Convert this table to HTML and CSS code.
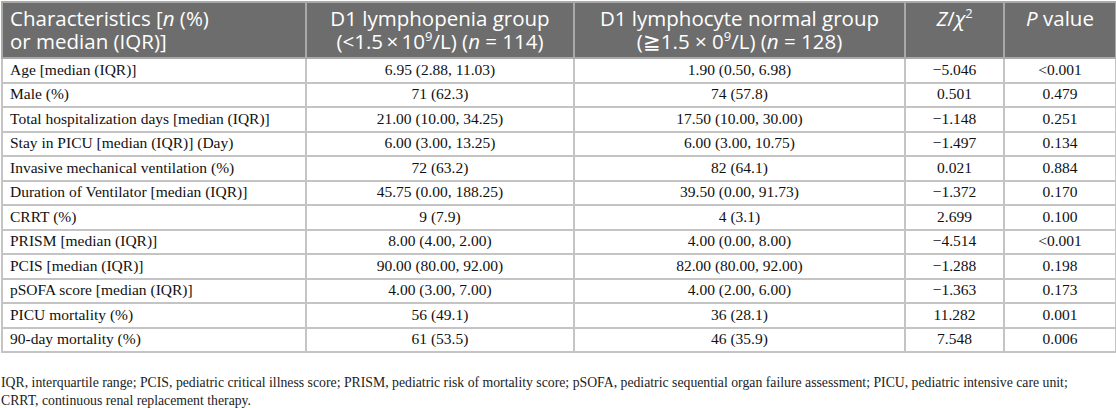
FILE: index.html
```html
<!DOCTYPE html>
<html>
<head>
<meta charset="utf-8">
<link rel="stylesheet" href="styles.css">
</head>
<body>
<table class="tbl">
  <colgroup>
    <col class="c1"><col class="c2"><col class="c3"><col class="c4"><col class="c5">
  </colgroup>
  <thead>
    <tr>
      <th class="left">Characteristics [<i>n</i> (%)<br>or median (IQR)]</th>
      <th>D1 lymphopenia group<br>(&lt;1.5&#8201;×&#8201;10<sup>9</sup>/L) (<i>n</i> = 114)</th>
      <th>D1 lymphocyte normal group<br>(<span class="geq">≧</span>1.5 × 0<sup>9</sup>/L) (<i>n</i> = 128)</th>
      <th class="top"><i>Z</i>/<i>χ</i><sup>2</sup></th>
      <th class="top"><i>P</i> value</th>
    </tr>
  </thead>
  <tbody>
    <tr><td>Age [median (IQR)]</td><td>6.95 (2.88, 11.03)</td><td>1.90 (0.50, 6.98)</td><td>−5.046</td><td>&lt;0.001</td></tr>
    <tr><td>Male (%)</td><td>71 (62.3)</td><td>74 (57.8)</td><td>0.501</td><td>0.479</td></tr>
    <tr><td>Total hospitalization days [median (IQR)]</td><td>21.00 (10.00, 34.25)</td><td>17.50 (10.00, 30.00)</td><td>−1.148</td><td>0.251</td></tr>
    <tr><td>Stay in PICU [median (IQR)] (Day)</td><td>6.00 (3.00, 13.25)</td><td>6.00 (3.00, 10.75)</td><td>−1.497</td><td>0.134</td></tr>
    <tr><td>Invasive mechanical ventilation (%)</td><td>72 (63.2)</td><td>82 (64.1)</td><td>0.021</td><td>0.884</td></tr>
    <tr><td>Duration of Ventilator [median (IQR)]</td><td>45.75 (0.00, 188.25)</td><td>39.50 (0.00, 91.73)</td><td>−1.372</td><td>0.170</td></tr>
    <tr><td>CRRT (%)</td><td>9 (7.9)</td><td>4 (3.1)</td><td>2.699</td><td>0.100</td></tr>
    <tr><td>PRISM [median (IQR)]</td><td>8.00 (4.00, 2.00)</td><td>4.00 (0.00, 8.00)</td><td>−4.514</td><td>&lt;0.001</td></tr>
    <tr><td>PCIS [median (IQR)]</td><td>90.00 (80.00, 92.00)</td><td>82.00 (80.00, 92.00)</td><td>−1.288</td><td>0.198</td></tr>
    <tr><td>pSOFA score [median (IQR)]</td><td>4.00 (3.00, 7.00)</td><td>4.00 (2.00, 6.00)</td><td>−1.363</td><td>0.173</td></tr>
    <tr><td>PICU mortality (%)</td><td>56 (49.1)</td><td>36 (28.1)</td><td>11.282</td><td>0.001</td></tr>
    <tr><td>90-day mortality (%)</td><td>61 (53.5)</td><td>46 (35.9)</td><td>7.548</td><td>0.006</td></tr>
  </tbody>
</table>
<p class="note">IQR, interquartile range; PCIS, pediatric critical illness score; PRISM, pediatric risk of mortality score; pSOFA, pediatric sequential organ failure assessment; PICU, pediatric intensive care unit;<br>CRRT, continuous renal replacement therapy.</p>
</body>
</html>
```
FILE: styles.css
```css
html, body {
  margin: 0;
  padding: 0;
  background: #ffffff;
}
body {
  padding: 1px 0 0 1px;
}
.tbl {
  border-collapse: collapse;
  width: 1114px;
  table-layout: fixed;
}
.c1 { width: 304px; }
.c2 { width: 268px; }
.c3 { width: 331px; }
.c4 { width: 99px; }
.c5 { width: 112px; }
.tbl th {
  background: #6d6d6d;
  color: #ffffff;
  font-family: "Open Sans", "Noto Sans", sans-serif;
  font-weight: 400;
  font-size: 20.5px;
  line-height: 23px;
  text-align: center;
  vertical-align: top;
  padding: 4px 5px 4px 5px;
  border: 2px solid #a9a9a9;
}
.tbl th.left { text-align: left; padding-left: 7px; }
.tbl th sup { font-size: 13px; line-height: 0; vertical-align: 8px; }
.tbl td {
  font-family: "Liberation Serif", "Times New Roman", serif;
  font-size: 15.5px;
  color: #111;
  line-height: 17.5px;
  height: 17.5px;
  padding: 1.5px 6px 3.5px 6px;
  border: 2px solid #c4c4c4;
  text-align: center;
  white-space: nowrap;
}
.tbl td:first-child { text-align: left; padding-left: 7px; }
.note {
  margin: 21px 0 0 0;
  font-family: "Liberation Serif", "Times New Roman", serif;
  font-size: 13.75px;
  line-height: 18px;
  color: #222;
  white-space: nowrap;
}
```
